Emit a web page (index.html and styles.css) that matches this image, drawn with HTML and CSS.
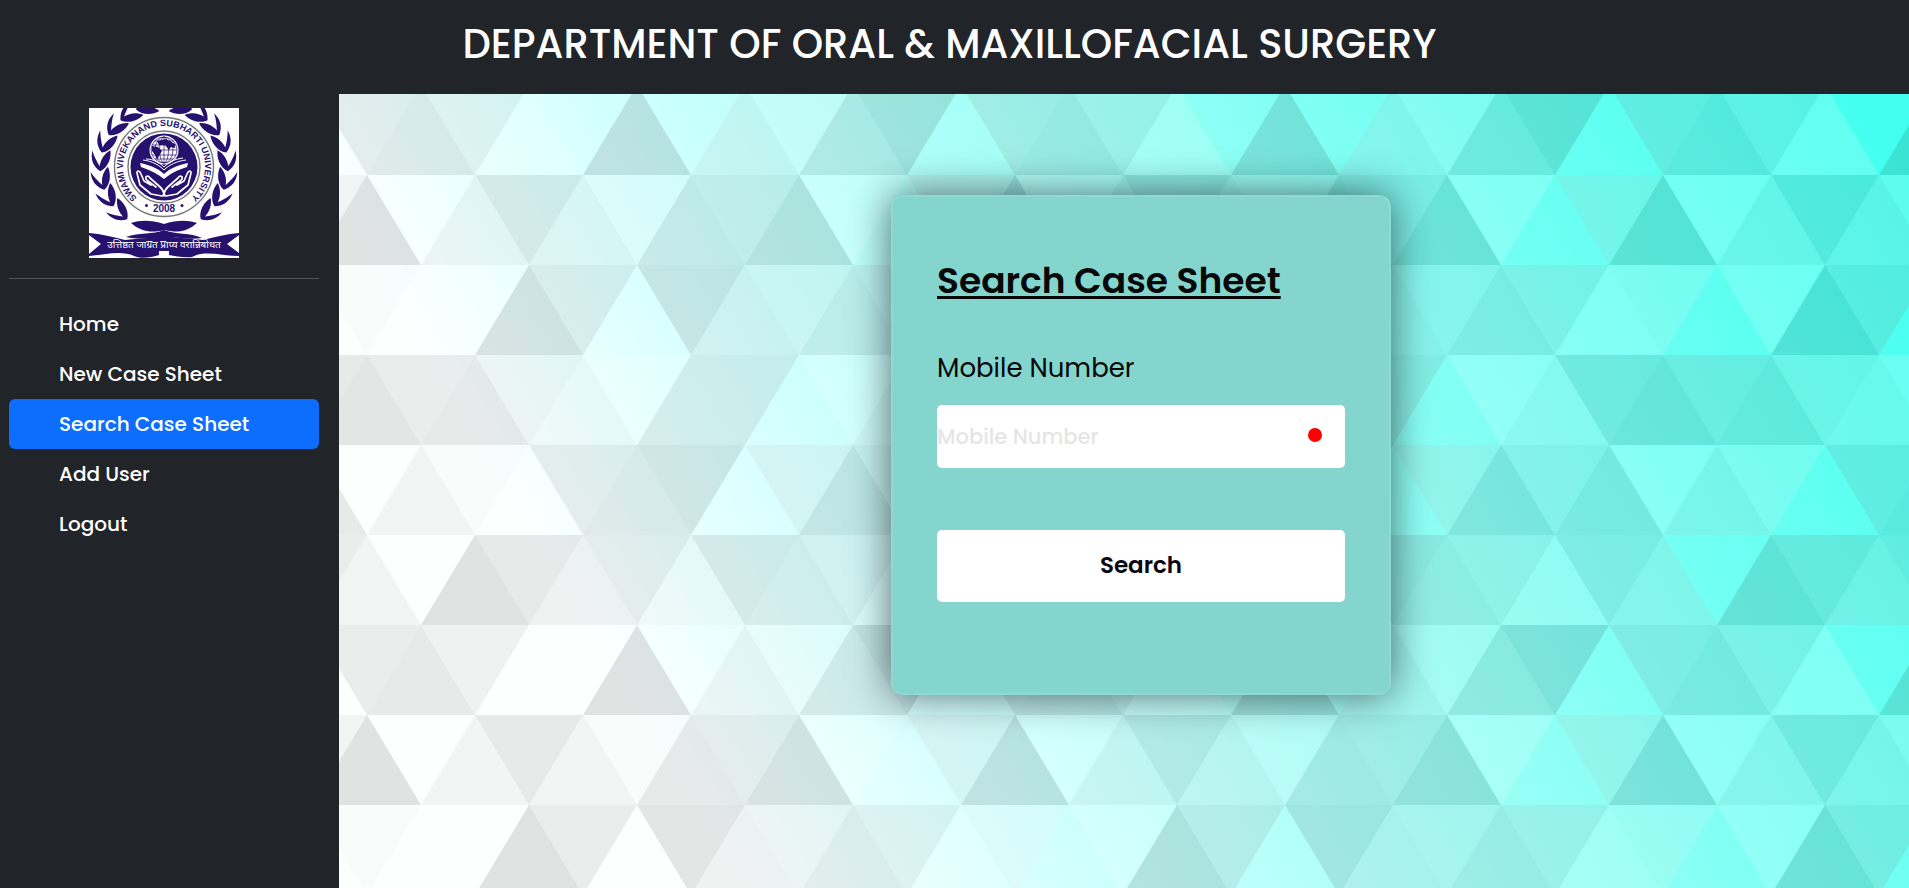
FILE: index.html
```html
<!DOCTYPE html>
<html lang="en">
<head>
<meta charset="utf-8">
<meta name="viewport" content="width=device-width, initial-scale=1">
<title>Search Case Sheet</title>
<link rel="stylesheet" href="styles.css">
</head>
<body>
<header class="topbar">
  <h1 class="topbar-title">DEPARTMENT OF ORAL &amp; MAXILLOFACIAL SURGERY</h1>
</header>
<div class="layout">
  <aside class="sidebar">
    <svg class="logo" viewBox="0 0 150 150" role="img" aria-label="Swami Vivekanand Subharti University">
      <defs>
        <path id="ring" d="M75 100A41 41 0 1 1 75.1 100"/>
        <path id="leaf" d="M63 11C70 7 74 1 73 -9C70 -2 67 2 64 6C64 0 61 -7 55 -11C53 -3 56 7 63 11Z"/>
        <g id="branch">
          <use href="#leaf" transform="rotate(-74)"/>
          <use href="#leaf" transform="rotate(-57)"/>
          <use href="#leaf" transform="rotate(-40)"/>
          <use href="#leaf" transform="rotate(-23)"/>
          <use href="#leaf" transform="rotate(-6)"/>
          <use href="#leaf" transform="rotate(11)"/>
          <use href="#leaf" transform="rotate(28)"/>
          <use href="#leaf" transform="rotate(45)"/>
        </g>
      </defs>
      <rect width="150" height="150" fill="#fff"/>
      <g fill="#27116f">
        <use href="#branch" transform="translate(75 59)"/>
        <use href="#branch" transform="translate(75 59) scale(-1 1)"/>
        <path d="M42 115C52 112 62 112 75 116C88 112 98 112 108 115C98 124 88 125 76 122C63 125 52 124 42 115Z"/>
        <path d="M37 129C50 124 64 127 75 122C87 127 101 124 113 130C100 132 87 129 75 129C62 130 50 132 37 129Z"/>
        <path d="M0 125C12 126 24 129 36 132C50 130 62 131 75 127C88 131 102 130 114 132C126 129 138 126 150 125L150 127L138 136L150 145L150 148C132 148 116 142 103 149C95 150 86 148 80 147L80 143L70 143L70 147C60 150 52 151 45 148C32 142 16 147 0 148L0 146L12 136L0 127Z"/>
        <circle cx="75" cy="59" r="33.5"/>
      </g>
      <g fill="none" stroke="#77777c" stroke-width="1.4">
        <circle cx="75" cy="59" r="49.5"/>
        <circle cx="75" cy="59" r="36"/>
      </g>
      <text class="logo-ring"><textPath href="#ring" startOffset="50%">SWAMI VIVEKANAND SUBHARTI UNIVERSITY</textPath></text>
      <text class="logo-year" x="75" y="104">2008</text>
      <g fill="#27116f"><circle cx="57.500" cy="97.500" r="1.500"/><circle cx="93" cy="97.500" r="1.500"/></g>
      <circle cx="75" cy="42" r="14.5" fill="#fff"/>
      <g fill="none" stroke="#27116f" stroke-width=".7">
        <circle cx="75" cy="42" r="13"/>
        <ellipse cx="75" cy="42" rx="4.500" ry="13"/>
        <ellipse cx="75" cy="42" rx="9" ry="13"/>
        <path d="M75 29V55M62 42H88M63 37H87M65 33H85M63 47H87M66 51H84"/>
      </g>
      <path d="M68 33L77 31L86 36L86 40L82 39L80 42L76 37L70 37ZM63 38L69 39L73 43L70 48L68 52L66 47L63 43Z" fill="#27116f"/>
      <path d="M51 55C60 57 69 60 75 66C81 60 90 57 99 55L98 59C88 62 81 66 75 71C69 66 61 62 52 59Z" fill="#fff"/>
      <path d="M54 52C63 53 70 57 75 62C80 57 88 53 97 52M57 51C65 51 71 55 75 59C80 54 86 51 94 50" fill="none" stroke="#fff" stroke-width="1"/>
      <g fill="none" stroke="#fff" stroke-width="1.700" stroke-linecap="round" stroke-linejoin="round">
        <path id="hand" d="M48 65C48 62 51 63 52 66L55 73L62 77L57 71C56 68 59 67 61 70L70 78C75 82 75 85 76 88M48 65L51 77L62 86L73 88M59 73L67 79"/>
        <use href="#hand" transform="translate(150 0) scale(-1 1)"/>
      </g>
      <text class="logo-motto" x="75" y="140">उत्तिष्ठत जाग्रत प्राप्य वरान्निबोधत</text>
    </svg>
    <nav class="menu">
      <a class="menu-link" href="#home">Home</a>
      <a class="menu-link" href="#new">New Case Sheet</a>
      <a class="menu-link active" href="#search" aria-current="page">Search Case Sheet</a>
      <a class="menu-link" href="#user">Add User</a>
      <a class="menu-link" href="#logout">Logout</a>
    </nav>
  </aside>
  <main class="content">
    <svg class="backdrop" aria-hidden="true">
      <defs>
        <linearGradient id="teal" gradientUnits="userSpaceOnUse" x1="-50" y1="30" x2="1123" y2="-674">
          <stop offset="0" stop-color="#fdffff"/>
          <stop offset=".053" stop-color="#f0ffff"/>
          <stop offset=".162" stop-color="#daffff"/>
          <stop offset=".412" stop-color="#aafff8"/>
          <stop offset=".74" stop-color="#6efff3"/>
          <stop offset="1" stop-color="#42ffef"/>
        </linearGradient>
        <pattern id="triangles" patternUnits="userSpaceOnUse" x="28" y="81" width="648" height="540"></pattern>
      </defs>
      <rect width="100%" height="100%" fill="url(#teal)"/>
      <rect width="100%" height="100%" fill="url(#triangles)"/>
    </svg>
    <form class="card" onsubmit="return false">
      <h2 class="card-title">Search Case Sheet</h2>
      <label class="card-label" for="mobile">Mobile Number</label>
      <div class="field">
        <input class="field-input" id="mobile" type="tel" placeholder="Mobile Number">
        <span class="field-dot"></span>
      </div>
      <button class="card-button" type="submit">Search</button>
    </form>
  </main>
</div>
<script src="pattern.js"></script>
</body>
</html>
```
FILE: styles.css
```css
* { box-sizing: border-box; }

body {
  margin: 0;
  min-height: 100vh;
  display: flex;
  flex-direction: column;
  background: #212529;
  font-family: Poppins, Inter, "Open Sans", sans-serif;
}

.topbar {
  padding: 14px 20px 20px 10px;
  background: #212529;
  color: #fff;
  text-align: center;
}

.topbar-title {
  margin: 0;
  font-size: 40px;
  font-weight: 500;
  line-height: 60px;
}

.layout {
  flex: 1;
  display: flex;
}

.sidebar {
  flex: 0 0 339px;
  padding: 14px 20px 14px 9px;
  display: flex;
  flex-direction: column;
  color: #fff;
}

.logo {
  width: 150px;
  height: 150px;
  align-self: center;
}

.logo-ring,
.logo-year {
  fill: #27116f;
  font-family: "Liberation Sans", Arial, sans-serif;
  font-weight: 700;
  text-anchor: middle;
}

.logo-ring { font-size: 9px; }
.logo-year { font-size: 10px; }

.logo-motto {
  fill: #fff;
  font-family: "Noto Sans", "Noto Sans Devanagari", sans-serif;
  font-size: 10px;
  text-anchor: middle;
}

.menu {
  margin-top: 20px;
  padding-top: 20px;
  border-top: 1px solid #505357;
  display: flex;
  flex-direction: column;
}

.menu-link {
  padding: 10px 50px;
  border-radius: 6px;
  color: #fff;
  font-size: 20px;
  font-weight: 500;
  line-height: 30px;
  text-decoration: none;
}

.menu-link.active { background: #0d6efd; }

.content {
  position: relative;
  flex: 1;
  min-width: 0;
  padding: 101px 0 40px 34px;
  overflow: hidden;
}

.backdrop {
  position: absolute;
  inset: 0;
  width: 100%;
  height: 100%;
}

.card {
  position: relative;
  max-width: 500px;
  min-height: 500px;
  margin: 0 auto;
  padding: 60px 44px 44px;
  display: flex;
  flex-direction: column;
  border: 2px solid #8ed9d2;
  border-radius: 12px;
  background: #83d5cd;
  box-shadow: 0 0 40px rgba(8, 7, 16, 0.6);
  color: #080710;
}

.card-title {
  margin: 0;
  color: #080808;
  font-size: 36px;
  font-weight: 600;
  line-height: 48px;
  text-decoration: underline;
  text-decoration-thickness: 3px;
  text-underline-offset: 3px;
  text-decoration-skip-ink: none;
}

.card-label {
  margin-top: 43px;
  color: #080808;
  font-size: 26px;
  line-height: 40px;
}

.field {
  position: relative;
  margin-top: 17px;
}

.field-input {
  display: block;
  width: 100%;
  height: 63px;
  padding: 0;
  border: 0;
  border-radius: 5px;
  background: #fff;
  font: 500 21px Poppins, Inter, "Open Sans", sans-serif;
}

.field-input::placeholder {
  color: #e5e5e5;
  opacity: 1;
}

.field-dot {
  position: absolute;
  top: 23px;
  right: 23px;
  width: 14px;
  height: 14px;
  border-radius: 50%;
  background: #f00;
}

.card-button {
  height: 72px;
  margin-top: 62px;
  padding: 0 0 2px;
  border: 0;
  border-radius: 5px;
  background: #fff;
  color: #080710;
  font: 600 23px Poppins, Inter, "Open Sans", sans-serif;
}
```
FILE: pattern.js
```js
// Shade index of each triangle in the repeating tile, one string per row.
const rows = [
  "914742769104",
  "201960854651",
  "867431660137",
  "142067804857",
  "409756376526",
  "675109042790",
];

// Grey level and opacity for every shade index.
const shades = [
  [255, 0], [255, 0.15], [235, 0.15], [215, 0.15], [190, 0.15],
  [165, 0.15], [130, 0.14], [95, 0.13], [50, 0.12], [0, 0.11],
];

const half = 54;
const height = 90;
const pattern = document.getElementById("triangles");

function addTriangle(center, row, pointsUp, shade) {
  const [grey, opacity] = shades[shade];
  const top = row * height;
  const apex = pointsUp ? top : top + height;
  const base = pointsUp ? top + height : top;
  const polygon = document.createElementNS("http://www.w3.org/2000/svg", "polygon");
  polygon.setAttribute("points", `${center},${apex} ${center - half},${base} ${center + half},${base}`);
  polygon.setAttribute("fill", `rgba(${grey},${grey},${grey},${opacity})`);
  pattern.appendChild(polygon);
}

rows.forEach((row, r) => {
  [...row].forEach((shade, k) => {
    const pointsUp = (r + k) % 2 === 0;
    addTriangle(k * half, r, pointsUp, Number(shade));
    if (k === 0) addTriangle(row.length * half, r, pointsUp, Number(shade));
  });
});
```
